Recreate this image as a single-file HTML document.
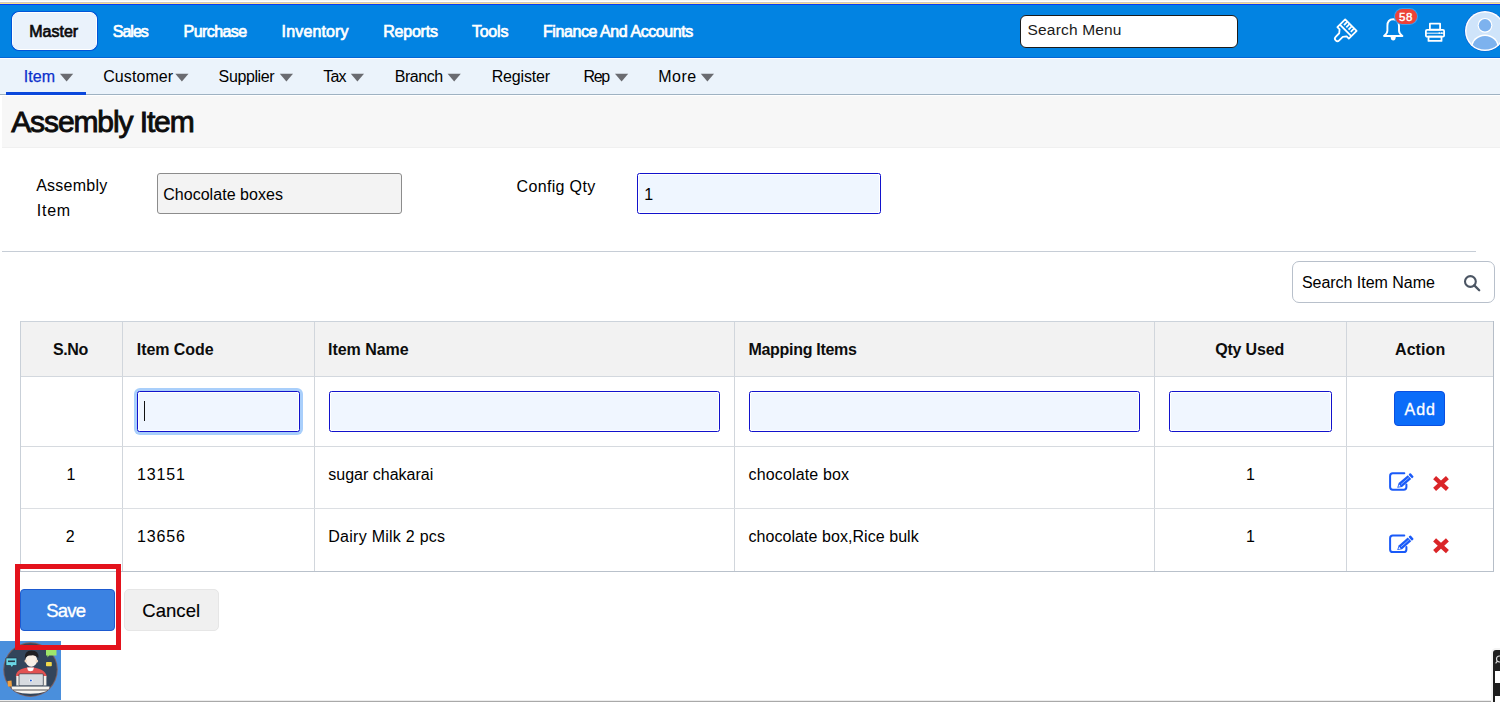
<!DOCTYPE html>
<html><head><meta charset="utf-8"><title>Assembly Item</title>
<style>
html,body{margin:0;padding:0;}
body{width:1500px;height:702px;position:relative;overflow:hidden;background:#fff;font-family:"Liberation Sans",sans-serif;}
.a{position:absolute;box-sizing:border-box;}
.t{position:absolute;line-height:0;white-space:nowrap;}
</style></head><body>
<!-- top strip -->
<div class="a" style="left:0;top:0;width:1500px;height:1px;background:#f5f6f6"></div>
<div class="a" style="left:0;top:2px;width:1500px;height:1px;background:#d2cac0"></div>
<div class="a" style="left:0;top:3px;width:1500px;height:1px;background:#fde08a"></div>
<div class="a" style="left:0;top:4px;width:1500px;height:54px;background:#0283e2;border-top:1px solid #0a3cf5;border-bottom:1px solid #0466d6"></div>
<!-- master button -->
<div class="a" style="left:11px;top:11px;width:87px;height:40px;border-radius:8px;background:#0055d8"></div>
<div class="a" style="left:12px;top:12px;width:85px;height:38px;border-radius:7px;background:#eaf2fb;border:1.5px solid #fff"></div>
<!-- search menu -->
<div class="a" style="left:1020px;top:15px;width:218px;height:33px;border-radius:6px;background:#fff;border:1px solid #1b1b1b"></div>
<!-- brush icon -->
<svg class="a" style="left:1329.3px;top:14.1px" width="36" height="36" viewBox="0 0 36 36">
  <g transform="rotate(45 18 15)" fill="none" stroke="#fff" stroke-width="1.8" stroke-linejoin="round">
    <path d="M9.9 9.5 L26.1 9.5 L26.1 20.5 L23 20.5 L20.5 23.5 L20.5 28.5 Q20.5 31 18 31 Q15.5 31 15.5 28.5 L15.5 23.5 L13 20.5 L9.9 20.5 Z"/>
    <line x1="9.9" y1="17" x2="26.1" y2="17"/>
    <line x1="13.1" y1="9.5" x2="13.1" y2="14.3"/><line x1="16.3" y1="9.5" x2="16.3" y2="14.3"/><line x1="19.5" y1="9.5" x2="19.5" y2="14.3"/><line x1="22.7" y1="9.5" x2="22.7" y2="14.3"/>
  </g>
</svg>
<!-- bell icon -->
<svg class="a" style="left:1380px;top:15px" width="28" height="28" viewBox="0 0 28 28">
  <path d="M13.2 4.3 C9 4.3 7.4 7.6 7.4 11 L7.4 15.8 C7.4 18.3 5.6 19.8 4 21 L22.4 21 C20.8 19.8 19 18.3 19 15.8 L19 11 C19 7.6 17.4 4.3 13.2 4.3 Z" fill="none" stroke="#fff" stroke-width="1.9" stroke-linejoin="round"/>
  <path d="M10.6 22 L15.8 22 Q15.5 25.6 13.2 25.6 Q10.9 25.6 10.6 22 Z" fill="#fff"/>
</svg>
<!-- badge -->
<div class="a" style="left:1394px;top:8px;width:24px;height:17px;border-radius:9px;background:#39a0f0"></div>
<div class="a" style="left:1395px;top:9px;width:22px;height:15px;border-radius:8px;background:#ec4238"></div>
<!-- printer -->
<svg class="a" style="left:1423px;top:21px" width="24" height="22" viewBox="0 0 24 22">
  <g fill="none" stroke="#fff" stroke-width="1.8" stroke-linejoin="round">
    <rect x="6.9" y="2.7" width="10.2" height="6"/>
    <rect x="2.9" y="8.8" width="18.2" height="6.8" rx="1.2"/>
    <rect x="5.5" y="15.6" width="13" height="4.3"/>
  </g>
  <line x1="3" y1="12.2" x2="21" y2="12.2" stroke="#fff" stroke-width="1"/>
  <rect x="15.6" y="11.4" width="1.4" height="1.4" fill="#fff"/><rect x="18" y="11.4" width="1.4" height="1.4" fill="#fff"/>
</svg>
<!-- avatar -->
<svg class="a" style="left:1460px;top:6px" width="50" height="50" viewBox="0 0 50 50">
  <defs><clipPath id="cav"><circle cx="25" cy="25" r="18.6"/></clipPath></defs>
  <circle cx="25" cy="25" r="20.6" fill="#0a5fd0"/>
  <circle cx="25" cy="25" r="20" fill="#fff"/>
  <circle cx="25" cy="25" r="18.6" fill="#cfe4fa"/>
  <g clip-path="url(#cav)">
    <circle cx="25" cy="19.3" r="7.4" fill="#fff"/>
    <circle cx="25" cy="19.3" r="6.2" fill="#7db2ee"/>
    <ellipse cx="25" cy="41.5" rx="14" ry="13" fill="#fff"/>
    <ellipse cx="25" cy="42" rx="12.7" ry="12" fill="#7db2ee"/>
  </g>
</svg>
<!-- sub nav -->
<div class="a" style="left:0;top:58px;width:1500px;height:1px;background:#fdfeff"></div>
<div class="a" style="left:0;top:59px;width:1500px;height:35px;background:#ebf3fb"></div>
<div class="a" style="left:0;top:94px;width:1500px;height:1px;background:#9fb2c2"></div>
<div class="a" style="left:6px;top:92px;width:80px;height:3px;background:#0b48dc"></div>
<!-- triangles -->
<svg class="a" style="left:0;top:0" width="740" height="90" viewBox="0 0 740 90">
  <g fill="#6a6b70">
    <path d="M60 73.8 L73.2 73.8 L66.6 81.5 Z"/>
    <path d="M175.3 73.8 L188.5 73.8 L181.9 81.5 Z"/>
    <path d="M279.8 73.8 L293 73.8 L286.4 81.5 Z"/>
    <path d="M350.8 73.8 L364 73.8 L357.4 81.5 Z"/>
    <path d="M447.6 73.8 L460.8 73.8 L454.2 81.5 Z"/>
    <path d="M615 73.8 L628.2 73.8 L621.6 81.5 Z"/>
    <path d="M700.8 73.8 L714 73.8 L707.4 81.5 Z"/>
  </g>
</svg>

<!-- heading band -->
<div class="a" style="left:2px;top:96px;width:1498px;height:51px;background:#f7f7f7"></div>
<div class="a" style="left:2px;top:147px;width:1498px;height:1px;background:#f0f0f0"></div>

<!-- form inputs -->
<div class="a" style="left:157px;top:173px;width:245px;height:41px;border-radius:3px;background:#f3f3f3;border:1px solid #8c8c8c"></div>
<div class="a" style="left:637px;top:173px;width:244px;height:41px;border-radius:2.5px;background:#eff6ff;border:1px solid #1212cc;box-shadow:inset 0 0 0 1px #fff"></div>
<div class="a" style="left:2px;top:251px;width:1474px;height:1px;background:#c6cdd6"></div>

<!-- search item name -->
<div class="a" style="left:1292px;top:261px;width:203px;height:42px;border-radius:7px;background:#fff;border:1px solid #b8c0cb"></div>
<svg class="a" style="left:1462px;top:273px" width="20" height="20" viewBox="0 0 20 20">
  <circle cx="8.4" cy="8.5" r="5.4" fill="none" stroke="#4b5563" stroke-width="2.1"/>
  <line x1="12.3" y1="12.4" x2="17.2" y2="17.3" stroke="#4b5563" stroke-width="2.3" stroke-linecap="round"/>
</svg>

<!-- table -->
<div class="a" style="left:20px;top:321px;width:1474px;height:55px;background:#f2f2f2"></div>
<svg class="a" style="left:0;top:0" width="1500" height="702" viewBox="0 0 1500 702">
  <g stroke-width="1" fill="none" shape-rendering="crispEdges">
    <line x1="122.5" y1="321" x2="122.5" y2="572" stroke="#d1d6dc"/>
    <line x1="314.5" y1="321" x2="314.5" y2="572" stroke="#d1d6dc"/>
    <line x1="734.5" y1="321" x2="734.5" y2="572" stroke="#d1d6dc"/>
    <line x1="1154.5" y1="321" x2="1154.5" y2="572" stroke="#d1d6dc"/>
    <line x1="1346.5" y1="321" x2="1346.5" y2="572" stroke="#d1d6dc"/>
    <line x1="20" y1="376.5" x2="1494" y2="376.5" stroke="#d3d8de"/>
    <line x1="20" y1="446.5" x2="1494" y2="446.5" stroke="#d6dadf"/>
    <line x1="20" y1="508.5" x2="1494" y2="508.5" stroke="#dcdfe3"/>
    <line x1="20" y1="321.5" x2="1494" y2="321.5" stroke="#ccd3db"/>
    <line x1="20.5" y1="321" x2="20.5" y2="572" stroke="#c9d0d8"/>
    <line x1="1493.5" y1="321" x2="1493.5" y2="572" stroke="#b6bec8"/>
    <line x1="20" y1="571.5" x2="1494" y2="571.5" stroke="#b9c1cb"/>
  </g>
</svg>
<!-- table inputs -->
<div class="a" style="left:134px;top:388px;width:169px;height:47px;border-radius:6px;background:#a9cffb"></div>
<div class="a" style="left:137px;top:391px;width:163px;height:41px;border-radius:2.5px;background:#f0f6ff;border:1px solid #1212cc;box-shadow:inset 0 0 0 1px #fff"></div>
<div class="a" style="left:144px;top:401px;width:1px;height:20px;background:#111"></div>
<div class="a" style="left:329px;top:391px;width:391px;height:41px;border-radius:2.5px;background:#f0f6ff;border:1px solid #1212cc;box-shadow:inset 0 0 0 1px #fff"></div>
<div class="a" style="left:749px;top:391px;width:391px;height:41px;border-radius:2.5px;background:#f0f6ff;border:1px solid #1212cc;box-shadow:inset 0 0 0 1px #fff"></div>
<div class="a" style="left:1169px;top:391px;width:163px;height:41px;border-radius:2.5px;background:#f0f6ff;border:1px solid #1212cc;box-shadow:inset 0 0 0 1px #fff"></div>
<!-- add btn -->
<div class="a" style="left:1394px;top:391px;width:51px;height:35px;border-radius:4px;background:#0b6cf9;border:1px solid #0a4fe0"></div>

<!-- action icons -->
<svg class="a" style="left:1386px;top:469px" width="70" height="86" viewBox="0 0 70 86">
  <g id="ic">
    <path d="M18.3 4.3 L6.8 4.3 Q4.1 4.3 4.1 7 L4.1 18.1 Q4.1 20.8 6.8 20.8 L17.7 20.8 Q20.4 20.8 20.4 18.1 L20.4 15.6" fill="none" stroke="#1a5af8" stroke-width="2" stroke-linecap="round"/>
    <g transform="translate(11.2 18.8) rotate(-41)">
      <path d="M0 0 L4.2 -2.6 L16.3 -2.6 L16.3 2.6 L4.2 2.6 Z" fill="#1a5af8"/>
      <rect x="17.2" y="-2.6" width="2.6" height="5.2" rx="0.8" fill="#1a5af8"/>
      <line x1="5" y1="0" x2="15.5" y2="0" stroke="#8fb3ff" stroke-width="0.9"/>
      <path d="M1.6 0 L3.6 -1.2 L3.6 1.2 Z" fill="#fff"/>
    </g>
    <path d="M48.6 8.6 L61.4 20.4 M61.4 8.6 L48.6 20.4" stroke="#da2528" stroke-width="4.3" stroke-linecap="butt"/>
  </g>
  <use href="#ic" y="62.3"/>
</svg>
<!-- save / cancel -->
<div class="a" style="left:20px;top:589px;width:95px;height:42px;border-radius:4px;background:#3b82e2;border:1px solid #1d5ad0"></div>
<div class="a" style="left:124px;top:589px;width:95px;height:42px;border-radius:5px;background:#f0f0f0;border:1px solid #e6e6e6"></div>

<!-- bottom avatar widget -->
<div class="a" style="left:0;top:640.5px;width:61px;height:59px;background:#4a8fdc"></div>
<svg class="a" style="left:0;top:638px" width="62" height="62" viewBox="0 0 62 62">
  <circle cx="30.5" cy="31.6" r="27.3" fill="#7d6060"/>
  <circle cx="30.5" cy="31.6" r="26.3" fill="#33455b"/>
  <!-- bubbles -->
  <path d="M6 20 L16.8 20 L16.8 27.5 L13 27.5 L12 30 L10.5 27.5 L6 27.5 Z" fill="#6ad6e6" stroke="#1d2a3a" stroke-width="0.6"/>
  <rect x="8" y="22.5" width="7" height="1.6" fill="#2a3a4a"/>
  <path d="M46 11.5 L56.5 11.5 L56.5 17.5 L49 17.5 L47.5 19.5 L47.5 17.5 L46 17.5 Z" fill="#9ee66a"/>
  <rect x="46" y="24" width="5.8" height="4.3" rx="0.8" fill="#f3d94a"/>
  <path d="M7.5 43 L11.5 42.5 L12 48.5 L8 48.5 Z" fill="#f0a040"/>
  <!-- body/shirt -->
  <path d="M15.8 38.5 Q16 30 30.5 29.2 Q45 30 46.8 38.5 Z" fill="#e25252"/>
  <path d="M27 29.5 L34 29.5 L33 32.5 Q30.5 34 28 32.5 Z" fill="#fff"/>
  <!-- head -->
  <ellipse cx="31.3" cy="22.3" rx="5.8" ry="6.4" fill="#f8efe6"/>
  <ellipse cx="25.8" cy="23" rx="1.3" ry="1.6" fill="#f5d9c0"/>
  <ellipse cx="36.8" cy="23" rx="1.3" ry="1.6" fill="#f5d9c0"/>
  <path d="M24.8 21 Q24 12.4 31.5 12.4 Q39.3 12.4 38.4 20 Q35 16.5 31 17.6 Q27 16.8 24.8 21 Z" fill="#1e1e22"/>
  <!-- arms -->
  <rect x="16.3" y="38" width="3.2" height="9.5" fill="#f4f0ea"/>
  <rect x="43.2" y="38" width="3.2" height="9.5" fill="#f4f0ea"/>
  <!-- laptop -->
  <rect x="19" y="35.8" width="24.3" height="12" rx="1" fill="#d7dbe0" stroke="#1a2230" stroke-width="0.6"/>
  <circle cx="30.9" cy="42.4" r="1.6" fill="#fff"/>
  <circle cx="30.9" cy="42.4" r="1" fill="#1f5bd8"/>
  <!-- table -->
  <path d="M11.5 48.6 L49.5 48.6 Q49.5 55.7 30.5 55.7 Q11.5 55.7 11.5 48.6 Z" fill="#f7f5f0"/>
  <line x1="13" y1="52" x2="48" y2="52" stroke="#2a2a30" stroke-width="0.8"/>
</svg>
<!-- red highlight box -->
<div class="a" style="left:15px;top:564px;width:106px;height:86px;border:5px solid #e3121c"></div>

<!-- bottom line & widget -->
<div class="a" style="left:0;top:700px;width:1492px;height:1px;background:#ededed"></div>
<div class="a" style="left:0;top:701px;width:1492px;height:1px;background:#a9a9a9"></div>
<div class="a" style="left:1491px;top:648px;width:9px;height:54px;border-radius:5px 0 0 0;background:#f4f4f4"></div>
<div class="a" style="left:1493px;top:650px;width:7px;height:52px;border-radius:3px 0 0 0;background:#1e1e1e"></div>
<svg class="a" style="left:1495px;top:655px" width="5" height="10" viewBox="0 0 5 10">
  <circle cx="4.5" cy="4" r="3" fill="none" stroke="#ddd" stroke-width="1.1"/>
  <line x1="2.4" y1="6.2" x2="0.6" y2="8.4" stroke="#ddd" stroke-width="1.1"/>
</svg>
<div class="a" style="left:1495px;top:671px;width:5px;height:12px;background:#fff"></div>
<div class="a" style="left:1495px;top:696px;width:5px;height:6px;background:#fff"></div>

<div class="t" style="left:29.2px;top:32.06px;font-size:16px;font-weight:normal;color:#0b0b0b;letter-spacing:0.020px;-webkit-text-stroke:0.7px #0b0b0b;">Master</div>
<div class="t" style="left:112.8px;top:32.06px;font-size:16px;font-weight:normal;color:#fff;letter-spacing:-1.006px;-webkit-text-stroke:0.7px #fff;">Sales</div>
<div class="t" style="left:183.6px;top:32.06px;font-size:16px;font-weight:normal;color:#fff;letter-spacing:-0.571px;-webkit-text-stroke:0.7px #fff;">Purchase</div>
<div class="t" style="left:281.6px;top:32.06px;font-size:16px;font-weight:normal;color:#fff;letter-spacing:0.148px;-webkit-text-stroke:0.7px #fff;">Inventory</div>
<div class="t" style="left:383.2px;top:32.06px;font-size:16px;font-weight:normal;color:#fff;letter-spacing:-0.221px;-webkit-text-stroke:0.7px #fff;">Reports</div>
<div class="t" style="left:471.9px;top:32.06px;font-size:16px;font-weight:normal;color:#fff;letter-spacing:-0.213px;-webkit-text-stroke:0.7px #fff;">Tools</div>
<div class="t" style="left:543.0px;top:32.06px;font-size:16px;font-weight:normal;color:#fff;letter-spacing:-0.426px;-webkit-text-stroke:0.7px #fff;">Finance And Accounts</div>
<div class="t" style="left:1027.6px;top:30.33px;font-size:15.5px;font-weight:normal;color:#1a1a1a;letter-spacing:0.161px;">Search Menu</div>
<div class="t" style="left:1399.0px;top:16.62px;font-size:11.5px;font-weight:normal;color:#fff;letter-spacing:0.608px;-webkit-text-stroke:0.4px #fff;">58</div>
<div class="t" style="left:23.7px;top:76.76px;font-size:16px;font-weight:normal;color:#0b30cc;letter-spacing:0.128px;-webkit-text-stroke:0.25px #0b30cc;">Item</div>
<div class="t" style="left:103.2px;top:76.76px;font-size:16px;font-weight:normal;color:#000;letter-spacing:0.093px;">Customer</div>
<div class="t" style="left:218.6px;top:76.76px;font-size:16px;font-weight:normal;color:#000;letter-spacing:-0.386px;">Supplier</div>
<div class="t" style="left:323.2px;top:76.76px;font-size:16px;font-weight:normal;color:#000;letter-spacing:-0.749px;">Tax</div>
<div class="t" style="left:394.7px;top:76.76px;font-size:16px;font-weight:normal;color:#000;letter-spacing:-0.439px;">Branch</div>
<div class="t" style="left:491.7px;top:76.76px;font-size:16px;font-weight:normal;color:#000;letter-spacing:-0.154px;">Register</div>
<div class="t" style="left:583.6px;top:76.76px;font-size:16px;font-weight:normal;color:#000;letter-spacing:-1.376px;">Rep</div>
<div class="t" style="left:658.2px;top:76.76px;font-size:16px;font-weight:normal;color:#000;letter-spacing:0.516px;">More</div>
<div class="t" style="left:11.2px;top:121.61px;font-size:30px;font-weight:normal;color:#0d0d0d;letter-spacing:-1.101px;-webkit-text-stroke:0.9px #0d0d0d;">Assembly Item</div>
<div class="t" style="left:36.2px;top:186.16px;font-size:16px;font-weight:normal;color:#000;letter-spacing:0.235px;">Assembly</div>
<div class="t" style="left:36.7px;top:210.66px;font-size:16px;font-weight:normal;color:#000;letter-spacing:0.794px;">Item</div>
<div class="t" style="left:163.2px;top:194.96px;font-size:16px;font-weight:normal;color:#000;letter-spacing:0.037px;">Chocolate boxes</div>
<div class="t" style="left:516.5px;top:187.16px;font-size:16px;font-weight:normal;color:#000;letter-spacing:0.346px;">Config Qty</div>
<div class="t" style="left:644.2px;top:195.06px;font-size:16px;font-weight:normal;color:#000;letter-spacing:0.000px;">1</div>
<div class="t" style="left:1301.9px;top:283.16px;font-size:16px;font-weight:normal;color:#000;letter-spacing:-0.026px;">Search Item Name</div>
<div class="t" style="left:53.0px;top:350.46px;font-size:16px;font-weight:bold;color:#0d0d0d;letter-spacing:-0.415px;">S.No</div>
<div class="t" style="left:136.8px;top:350.46px;font-size:16px;font-weight:bold;color:#0d0d0d;letter-spacing:-0.068px;">Item Code</div>
<div class="t" style="left:328.0px;top:350.46px;font-size:16px;font-weight:bold;color:#0d0d0d;letter-spacing:-0.028px;">Item Name</div>
<div class="t" style="left:748.5px;top:350.46px;font-size:16px;font-weight:bold;color:#0d0d0d;letter-spacing:-0.301px;">Mapping Items</div>
<div class="t" style="left:1215.2px;top:350.46px;font-size:16px;font-weight:bold;color:#0d0d0d;letter-spacing:-0.177px;">Qty Used</div>
<div class="t" style="left:1395.0px;top:350.46px;font-size:16px;font-weight:bold;color:#0d0d0d;letter-spacing:0.085px;">Action</div>
<div class="t" style="left:1404.6px;top:410.06px;font-size:16px;font-weight:normal;color:#fff;letter-spacing:0.866px;-webkit-text-stroke:0.3px #fff;">Add</div>
<div class="t" style="left:66.6px;top:474.56px;font-size:16px;font-weight:normal;color:#000;letter-spacing:0.000px;">1</div>
<div class="t" style="left:137.1px;top:474.56px;font-size:16px;font-weight:normal;color:#000;letter-spacing:0.802px;">13151</div>
<div class="t" style="left:328.3px;top:474.56px;font-size:16px;font-weight:normal;color:#000;letter-spacing:0.004px;">sugar chakarai</div>
<div class="t" style="left:748.5px;top:474.56px;font-size:16px;font-weight:normal;color:#000;letter-spacing:0.155px;">chocolate box</div>
<div class="t" style="left:1246.0px;top:474.56px;font-size:16px;font-weight:normal;color:#000;letter-spacing:0.000px;">1</div>
<div class="t" style="left:65.7px;top:537.26px;font-size:16px;font-weight:normal;color:#000;letter-spacing:0.000px;">2</div>
<div class="t" style="left:137.1px;top:537.26px;font-size:16px;font-weight:normal;color:#000;letter-spacing:0.802px;">13656</div>
<div class="t" style="left:328.3px;top:537.26px;font-size:16px;font-weight:normal;color:#000;letter-spacing:0.260px;">Dairy Milk 2 pcs</div>
<div class="t" style="left:748.5px;top:537.26px;font-size:16px;font-weight:normal;color:#000;letter-spacing:0.055px;">chocolate box,Rice bulk</div>
<div class="t" style="left:1246.0px;top:537.26px;font-size:16px;font-weight:normal;color:#000;letter-spacing:0.000px;">1</div>
<div class="t" style="left:46.3px;top:611.39px;font-size:18.5px;font-weight:normal;color:#fff;letter-spacing:-0.789px;-webkit-text-stroke:0.35px #fff;">Save</div>
<div class="t" style="left:142.2px;top:611.39px;font-size:18.5px;font-weight:normal;color:#000;letter-spacing:0.083px;-webkit-text-stroke:0.15px #000;">Cancel</div>
</body></html>
